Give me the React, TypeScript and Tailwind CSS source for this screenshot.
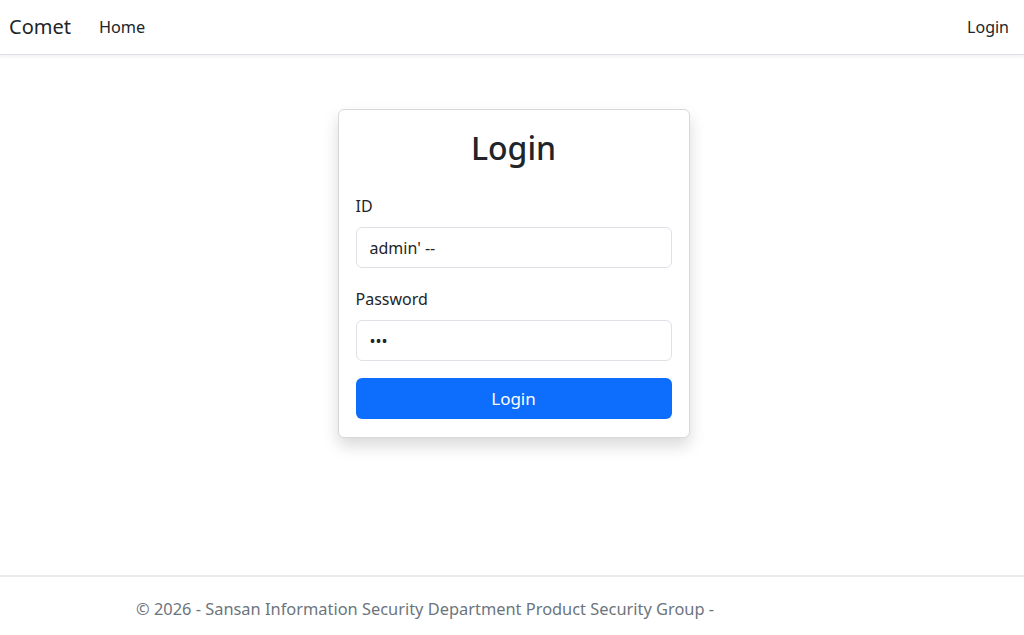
import { useState } from 'react';

const font = { fontFamily: '"Noto Sans", "Open Sans", Arial, sans-serif' };

function Navbar() {
  return (
    <nav className="relative z-10 flex h-[55px] items-center justify-between border-b border-[#dee2e6] bg-white px-[9px] shadow-[0_2px_3px_rgba(0,0,0,0.06)]">
      <div className="flex items-center">
        <a href="#" className="text-[20px] text-[#212529]">
          Comet
        </a>
        <a href="#" className="ml-[28px] text-[16.3px] text-[#212529]">
          Home
        </a>
      </div>
      <a href="#" className="mr-[6px] text-[16px] text-[#212529]">
        Login
      </a>
    </nav>
  );
}

function Field({
  label,
  type,
  value,
  onChange,
}: {
  label: string;
  type: string;
  value: string;
  onChange: (v: string) => void;
}) {
  return (
    <div className="flex flex-col">
      <label className="h-[24px] text-[16px] leading-[24px] text-[#212529]">{label}</label>
      <input
        type={type}
        value={value}
        onChange={(e) => onChange(e.target.value)}
        className="mt-[9px] h-[41px] rounded-[6px] border border-[#dee2e6] bg-white px-[13px] text-[16px] text-[#212529] outline-none"
        style={font}
      />
    </div>
  );
}

function LoginCard() {
  const [id, setId] = useState("admin' --");
  const [password, setPassword] = useState('abc');

  return (
    <div className="mx-auto w-[352px] rounded-[6px] border border-[#d6d9dc] bg-white px-[17px] pt-[19px] pb-[18px] shadow-[0_8px_16px_rgba(0,0,0,0.15)]">
      <h2 className="text-center text-[32px] leading-[38px] font-medium text-[#212529]">Login</h2>
      <div className="mt-[27px] flex flex-col gap-[19px]">
        <Field label="ID" type="text" value={id} onChange={setId} />
        <Field label="Password" type="password" value={password} onChange={setPassword} />
      </div>
      <button
        type="button"
        className="mt-[17px] h-[41px] w-full rounded-[6px] bg-[#0d6efd] text-[17px] text-white"
        style={font}
      >
        Login
      </button>
    </div>
  );
}

export default function App() {
  return (
    <div className="flex h-screen flex-col bg-white" style={font}>
      <Navbar />
      <main className="flex-1 pt-[54px] pl-[3px]">
        <LoginCard />
      </main>
      <footer className="h-[60px] border-t-2 border-[#e9ecef] pl-[136px] pt-[20px] text-[16.4px] leading-[24px] text-[#6c757d]">
        © 2026 - Sansan Information Security Department Product Security Group -
      </footer>
    </div>
  );
}
